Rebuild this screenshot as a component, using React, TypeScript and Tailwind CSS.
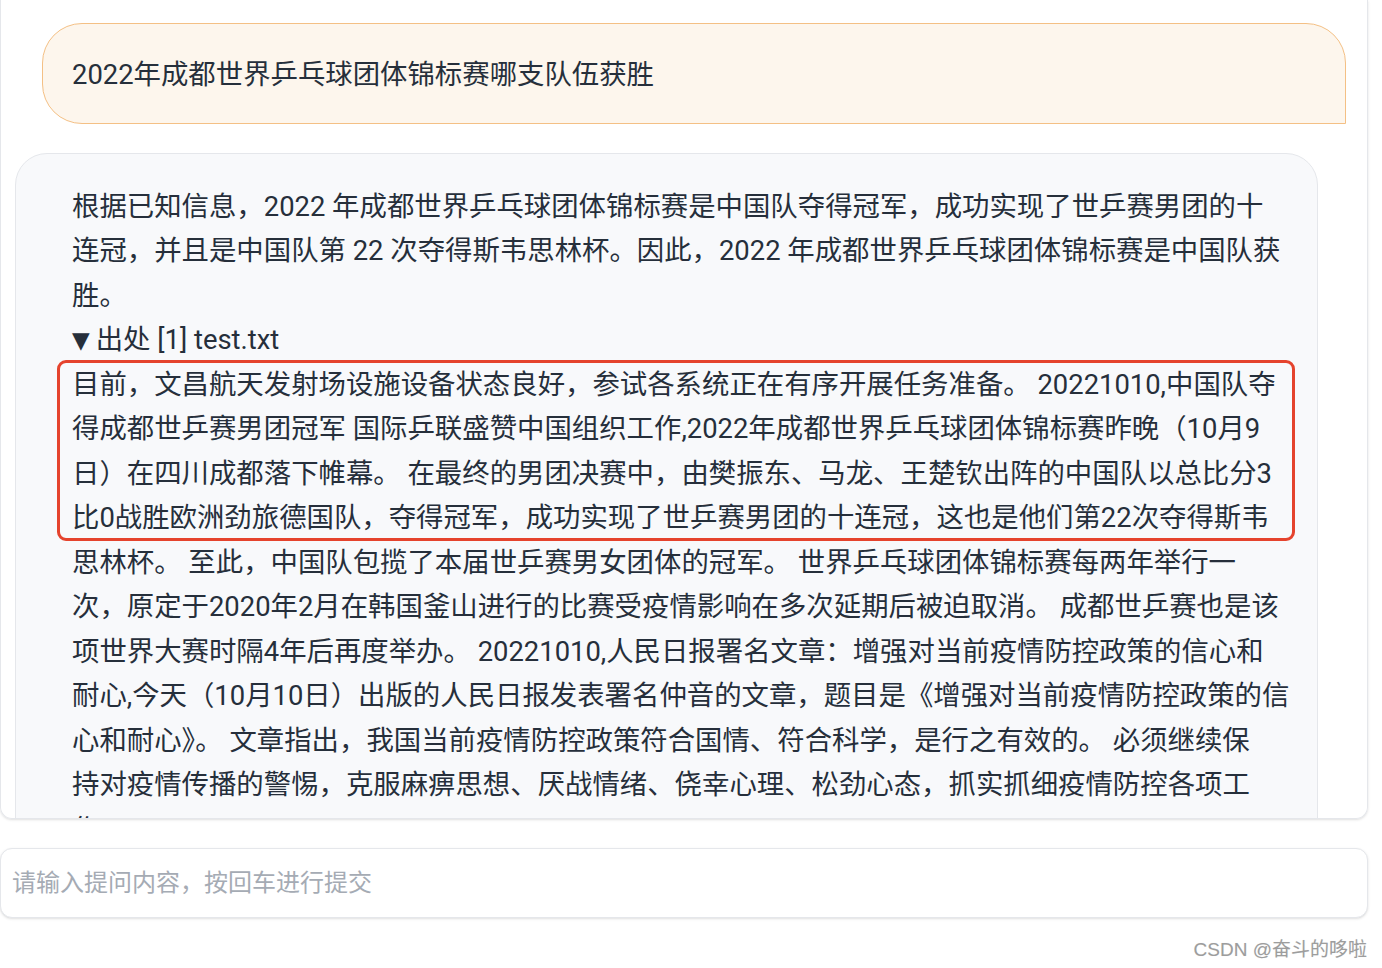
import React from "react";

const answerLines = [
  "根据已知信息，2022 年成都世界乒乓球团体锦标赛是中国队夺得冠军，成功实现了世乒赛男团的十",
  "连冠，并且是中国队第 22 次夺得斯韦思林杯。因此，2022 年成都世界乒乓球团体锦标赛是中国队获",
  "胜。",
];

const sourceLines = [
  "目前，文昌航天发射场设施设备状态良好，参试各系统正在有序开展任务准备。 20221010,中国队夺",
  "得成都世乒赛男团冠军 国际乒联盛赞中国组织工作,2022年成都世界乒乓球团体锦标赛昨晚（10月9",
  "日）在四川成都落下帷幕。 在最终的男团决赛中，由樊振东、马龙、王楚钦出阵的中国队以总比分3",
  "比0战胜欧洲劲旅德国队，夺得冠军，成功实现了世乒赛男团的十连冠，这也是他们第22次夺得斯韦",
  "思林杯。 至此，中国队包揽了本届世乒赛男女团体的冠军。 世界乒乓球团体锦标赛每两年举行一",
  "次，原定于2020年2月在韩国釜山进行的比赛受疫情影响在多次延期后被迫取消。 成都世乒赛也是该",
  "项世界大赛时隔4年后再度举办。 20221010,人民日报署名文章：增强对当前疫情防控政策的信心和",
  "耐心,今天（10月10日）出版的人民日报发表署名仲音的文章，题目是《增强对当前疫情防控政策的信",
  "心和耐心》。 文章指出，我国当前疫情防控政策符合国情、符合科学，是行之有效的。 必须继续保",
  "持对疫情传播的警惕，克服麻痹思想、厌战情绪、侥幸心理、松劲心态，抓实抓细疫情防控各项工",
  "作，",
];

const font = "font-['Roboto','Noto_Sans_CJK_SC',sans-serif]";

export default function App() {
  return (
    <div className={`min-h-screen bg-white ${font}`}>
      {/* chat history */}
      <div className="h-[819px] w-[1368px] overflow-hidden rounded-b-xl border-x border-b border-[#e5e7eb] shadow-sm">
        <div className="flex flex-col pt-[23px]">
          <div className="ml-[41px] mr-[21px] rounded-[40px] rounded-br-none border-[1.5px] border-[#f4c085] bg-[#fdf6ed] px-[29px] pt-[29px] pb-[25px]">
            <p className="text-[27.4px] leading-[44.5px] text-[#262f3b]">
              2022年成都世界乒乓球团体锦标赛哪支队伍获胜
            </p>
          </div>

          <div className="ml-[14px] mr-[49px] mt-[29px] rounded-[32px] border border-[#e5e7eb] bg-[#f8f9fb] pl-[56px] pr-[24px] pt-[31px] pb-8">
            <div className="text-[27.4px] leading-[44.5px] text-[#262f3b]">
              <p>
                {answerLines.map((line) => (
                  <span key={line} className="block whitespace-nowrap">
                    {line}
                  </span>
                ))}
              </p>
              <div>
                <div className="flex items-center whitespace-nowrap">
                  <span className="mr-[6px] font-['DejaVu_Sans'] text-[23px] leading-none">▼</span>
                  <span>出处 [1] test.txt</span>
                </div>
                <div className="relative">
                  {sourceLines.map((line) => (
                    <span key={line} className="block whitespace-nowrap">
                      {line}
                    </span>
                  ))}
                  {/* highlight annotation */}
                  <div className="pointer-events-none absolute left-[-15px] top-[-3px] h-[181px] w-[1238px] rounded-[9px] border-[3px] border-[#e5432d]" />
                </div>
              </div>
            </div>
          </div>
        </div>
      </div>

      {/* input */}
      <div className="mt-[29px] w-[1368px] rounded-xl border border-[#e5e7eb] bg-white px-[11px] shadow-sm">
        <input
          className="h-[68px] w-full bg-transparent text-[24px] text-[#262f3b] outline-none placeholder:text-[#a5abb4]"
          placeholder="请输入提问内容，按回车进行提交"
        />
      </div>

      <div className="mt-[20px] flex w-[1367px] justify-end">
        <span className="font-['Liberation_Sans','Noto_Sans_CJK_SC',sans-serif] text-[19px] leading-[24px] text-[#9d9d9d] [text-shadow:0_0_1px_#e5e5e5]">
          CSDN @奋斗的哆啦
        </span>
      </div>
    </div>
  );
}
